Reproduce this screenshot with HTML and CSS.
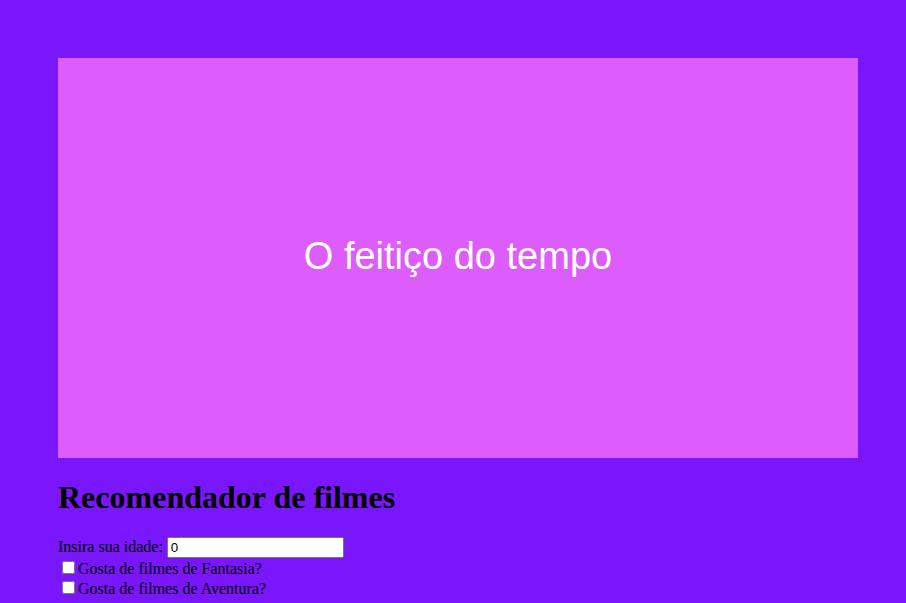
FILE: index.html
```html
<!DOCTYPE html>
<html lang="pt-BR">
<head>
<meta charset="utf-8">
<title>Recomendador de filmes</title>
<link rel="stylesheet" href="styles.css">
</head>
<body>
  <div class="banner">
    <p class="banner-title">O feitiço do tempo</p>
  </div>
  <h1 class="heading">Recomendador de filmes</h1>
  <div class="form">
    <label class="row">Insira sua idade: <input class="age" type="text" value="0"></label>
    <label class="row"><input class="check" type="checkbox">Gosta de filmes de Fantasia?</label>
    <label class="row"><input class="check" type="checkbox">Gosta de filmes de Aventura?</label>
  </div>
</body>
</html>
```
FILE: styles.css
```css
html, body {
  background: #7a16fb;
}
body {
  margin: 0;
  padding: 58px 0 0 58px;
  font-family: "Liberation Serif", "Times New Roman", serif;
  font-size: 16px;
  color: #000;
}
.banner {
  width: 800px;
  height: 400px;
  background: #dd5cfc;
  display: flex;
  align-items: center;
  justify-content: center;
}
.banner-title {
  margin: 0 0 4px;
  color: #fff;
  font-family: "Liberation Sans", Arial, sans-serif;
  font-size: 38px;
}
.heading {
  font-size: 32px;
  font-weight: bold;
  margin: 21px 0;
}
.row {
  display: block;
}
.age {
  width: 169px;
  font-family: "Liberation Sans", Arial, sans-serif;
  font-size: 13.33px;
}
.check {
  margin: 3px 3px 3px 4px;
}
```
